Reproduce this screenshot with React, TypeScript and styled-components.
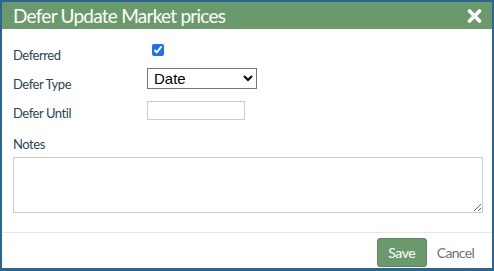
import React from 'react';
import styled, { createGlobalStyle } from 'styled-components';

const GlobalStyle = createGlobalStyle`
  html, body {
    margin: 0;
    padding: 0;
    background: #ffffff;
  }
  * {
    box-sizing: border-box;
  }
`;

const Dialog = styled.div`
  width: 494px;
  height: 271px;
  border: 2px solid #2a6690;
  border-bottom-width: 3px;
  display: flex;
  flex-direction: column;
  background: #ffffff;
  font-family: Lato, 'Open Sans', sans-serif;
`;

const Header = styled.div`
  height: 27px;
  background: #6a9a6b;
  display: flex;
  align-items: center;
  justify-content: space-between;
  padding: 0 10px 0 11px;
`;

const Title = styled.h2`
  margin: 0;
  font-size: 19px;
  font-weight: 400;
  letter-spacing: -0.75px;
  color: #ffffff;
`;

const CloseIcon = styled.svg`
  width: 15px;
  height: 14px;
  display: block;
`;

const Body = styled.div`
  flex: 1;
  padding: 11px 11px 0 11px;
  border-bottom: 1px solid #e6e6e6;
`;

const FieldRow = styled.div<{ $height: number }>`
  display: flex;
  align-items: flex-start;
  height: ${({ $height }) => $height}px;
`;

const Label = styled.label<{ $top: number }>`
  width: 134px;
  flex: none;
  padding-top: ${({ $top }) => $top}px;
  font-size: 13px;
  line-height: 16px;
  letter-spacing: -0.45px;
  color: #2b4854;
`;

const Control = styled.div<{ $top: number }>`
  padding-top: ${({ $top }) => $top}px;
  display: flex;
`;

const Check = styled.input`
  margin: 0 0 0 5px;
  width: 12px;
  height: 12px;
  accent-color: #1a73e8;
`;

const Select = styled.select`
  width: 110px;
  height: 21px;
  margin: 0;
  padding: 0 2px;
  border: 1px solid #767676;
  border-radius: 0;
  background: #ffffff;
  font-family: 'Liberation Sans', Arial, sans-serif;
  font-size: 15px;
  color: #000000;
`;

const TextInput = styled.input`
  width: 98px;
  height: 19px;
  margin: 0;
  border: 1px solid #cccccc;
  border-radius: 0;
`;

const NotesLabel = styled.div`
  font-size: 13px;
  line-height: 16px;
  letter-spacing: -0.45px;
  color: #2b4854;
  margin-bottom: 5px;
`;

const Notes = styled.textarea`
  display: block;
  width: 470px;
  height: 56px;
  margin: 0;
  border: 1px solid #cccccc;
  border-radius: 0;
  resize: both;
`;

const Footer = styled.div`
  height: 35px;
  display: flex;
  align-items: flex-end;
  justify-content: flex-end;
  gap: 10px;
  padding: 0 18px 1px 0;
`;

const SaveButton = styled.button`
  width: 50px;
  height: 29px;
  background: #6a9a6b;
  border: 1px solid #5b8a5c;
  border-radius: 3px;
  color: #ffffff;
  font-family: Lato, 'Open Sans', sans-serif;
  font-size: 14px;
  letter-spacing: -0.4px;
  padding: 0;
`;

const CancelLink = styled.span`
  font-size: 14px;
  line-height: 29px;
  letter-spacing: -0.7px;
  color: #667878;
`;

const App: React.FC = () => (
  <>
    <GlobalStyle />
    <Dialog>
      <Header>
        <Title>Defer Update Market prices</Title>
        <CloseIcon viewBox="0 0 15 14">
          <path d="M2.5 2 L12.5 12 M12.5 2 L2.5 12" stroke="#ffffff" strokeWidth="3.6" strokeLinecap="round" />
        </CloseIcon>
      </Header>
      <Body>
        <FieldRow $height={28}>
          <Label $top={7}>Deferred</Label>
          <Control $top={4}>
            <Check type="checkbox" defaultChecked />
          </Control>
        </FieldRow>
        <FieldRow $height={33}>
          <Label $top={8}>Defer Type</Label>
          <Control $top={0}>
            <Select defaultValue="Date">
              <option>Date</option>
            </Select>
          </Control>
        </FieldRow>
        <FieldRow $height={35}>
          <Label $top={4}>Defer Until</Label>
          <Control $top={0}>
            <TextInput type="text" />
          </Control>
        </FieldRow>
        <NotesLabel>Notes</NotesLabel>
        <Notes />
      </Body>
      <Footer>
        <SaveButton>Save</SaveButton>
        <CancelLink>Cancel</CancelLink>
      </Footer>
    </Dialog>
  </>
);

export default App;
